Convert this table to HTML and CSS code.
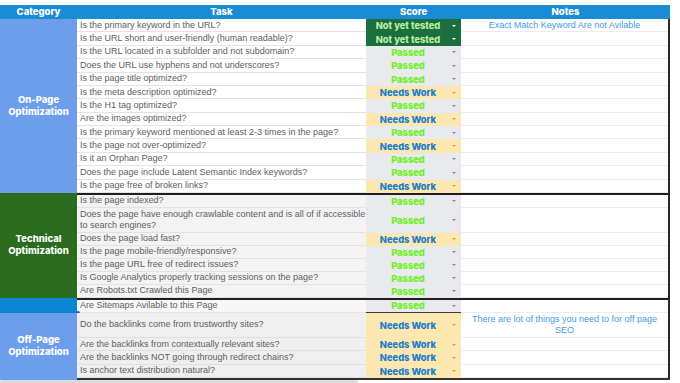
FILE: index.html
```html
<!DOCTYPE html>
<html lang="en">
<head>
<meta charset="utf-8">
<title>SEO Checklist</title>
<link rel="stylesheet" href="styles.css">
</head>
<body>
<div class="sheet">
  <div class="head">
    <div>Category</div>
    <div>Task</div>
    <div>Score</div>
    <div>Notes</div>
  </div>

  <section class="sec onpage">
    <div class="cat">On-Page<br>Optimization</div>
    <div class="rows">
      <div class="row"><div class="task">Is the primary keyword in the URL?</div><div class="score nyt">Not yet tested<i></i></div><div class="note">Exact Match Keyword Are not Avilable</div></div>
      <div class="row"><div class="task">Is the URL short and user-friendly (human readable)?</div><div class="score nyt">Not yet tested<i></i></div><div class="note"></div></div>
      <div class="row"><div class="task">Is the URL located in a subfolder and not subdomain?</div><div class="score ok">Passed<i></i></div><div class="note"></div></div>
      <div class="row"><div class="task">Does the URL use hyphens and not underscores?</div><div class="score ok">Passed<i></i></div><div class="note"></div></div>
      <div class="row"><div class="task">Is the page title optimized?</div><div class="score ok">Passed<i></i></div><div class="note"></div></div>
      <div class="row"><div class="task">Is the meta description optimized?</div><div class="score nw">Needs Work<i></i></div><div class="note"></div></div>
      <div class="row"><div class="task">Is the H1 tag optimized?</div><div class="score ok">Passed<i></i></div><div class="note"></div></div>
      <div class="row"><div class="task">Are the images optimized?</div><div class="score nw">Needs Work<i></i></div><div class="note"></div></div>
      <div class="row"><div class="task">Is the primary keyword mentioned at least 2-3 times in the page?</div><div class="score ok">Passed<i></i></div><div class="note"></div></div>
      <div class="row"><div class="task">Is the page not over-optimized?</div><div class="score nw">Needs Work<i></i></div><div class="note"></div></div>
      <div class="row"><div class="task">Is it an Orphan Page?</div><div class="score ok">Passed<i></i></div><div class="note"></div></div>
      <div class="row"><div class="task">Does the page include Latent Semantic Index keywords?</div><div class="score ok">Passed<i></i></div><div class="note"></div></div>
      <div class="row"><div class="task">Is the page free of broken links?</div><div class="score nw">Needs Work<i></i></div><div class="note"></div></div>
    </div>
  </section>

  <section class="sec tech">
    <div class="cat">Technical<br>Optimization</div>
    <div class="rows">
      <div class="row"><div class="task">Is the page indexed?</div><div class="score ok">Passed<i></i></div><div class="note"></div></div>
      <div class="row tall"><div class="task">Does the page have enough crawlable content and is all of if accessible<br>to search engines?</div><div class="score ok">Passed<i></i></div><div class="note"></div></div>
      <div class="row"><div class="task">Does the page load fast?</div><div class="score nw">Needs Work<i></i></div><div class="note"></div></div>
      <div class="row"><div class="task">Is the page mobile-friendly/responsive?</div><div class="score ok">Passed<i></i></div><div class="note"></div></div>
      <div class="row"><div class="task">Is the page URL free of redirect issues?</div><div class="score ok">Passed<i></i></div><div class="note"></div></div>
      <div class="row"><div class="task">Is Google Analytics properly tracking sessions on the page?</div><div class="score ok">Passed<i></i></div><div class="note"></div></div>
      <div class="row"><div class="task">Are Robots.txt Crawled this Page</div><div class="score ok">Passed<i></i></div><div class="note"></div></div>
    </div>
  </section>

  <section class="sec site">
    <div class="cat"></div>
    <div class="rows">
      <div class="row"><div class="task">Are Sitemaps Avilable to this Page</div><div class="score ok">Passed<i></i></div><div class="note"></div></div>
    </div>
    <span class="handle"></span>
  </section>

  <section class="sec off">
    <div class="cat">Off-Page<br>Optimization</div>
    <div class="rows">
      <div class="row tall"><div class="task">Do the backlinks come from trustworthy sites?</div><div class="score nw">Needs Work<i></i></div><div class="note">There are lot of things you need to for off page<br>SEO</div></div>
      <div class="row"><div class="task">Are the backlinks from contextually relevant sites?</div><div class="score nw">Needs Work<i></i></div><div class="note"></div></div>
      <div class="row"><div class="task">Are the backlinks NOT going through redirect chains?</div><div class="score nw">Needs Work<i></i></div><div class="note"></div></div>
      <div class="row"><div class="task">Is anchor text distribution natural?</div><div class="score nw">Needs Work<i></i></div><div class="note"></div></div>
    </div>
  </section>

  <div class="scrollbar"></div>
</div>
</body>
</html>
```

FILE: styles.css
```css
* { box-sizing: border-box; }

html, body {
  margin: 0;
  padding: 0;
  background: #ffffff;
}

body {
  font-family: "Liberation Sans", Arial, sans-serif;
}

.sheet {
  width: 670px;
  padding-top: 5px;
}

.head {
  display: grid;
  grid-template-columns: 77px 289px 95px 209px;
  height: 14px;
  background: #1a8bd5;
  color: #ffffff;
  font-family: Inter, "Open Sans", sans-serif;
  font-weight: 800;
  font-size: 9.5px;
  line-height: 14px;
  text-align: center;
}

.sec {
  position: relative;
  display: flex;
}

.cat {
  width: 77px;
  flex: none;
  display: flex;
  align-items: center;
  justify-content: center;
  text-align: center;
  color: #ffffff;
  font-family: Inter, "Open Sans", sans-serif;
  font-weight: 800;
  font-size: 9.5px;
  line-height: 12px;
}

.onpage .cat { background: #6d9eeb; }
.tech .cat { background: #2a6b1e; }
.site .cat { background: #0b86d4; }
.off .cat { background: #6d9eeb; }

.rows {
  width: 593px;
  border-right: 2px solid #2b2b2b;
}

.tech .rows,
.site .rows {
  border-top: 2px solid #1f1f1f;
}

.off .rows {
  border-bottom: 2px solid #333333;
}

.row {
  display: grid;
  grid-template-columns: 289px 95px 207px;
  height: 13.38px;
}

.tech .row { height: 13px; }
.site .row { height: 13px; }
.off .row { height: 13.34px; }
.row.tall { height: 25px; }

.task {
  display: flex;
  align-items: center;
  padding-left: 3px;
  font-size: 9px;
  line-height: 11px;
  color: #606060;
  border-bottom: 1px solid #e3e3e3;
  background: #ffffff;
  white-space: nowrap;
  overflow: hidden;
}

.tech .task { background: #f3f3f3; border-bottom-color: #e2e2e2; }
.site .task { background: #f7f7f7; }
.off .task { background: #efefef; border-bottom-color: #e0e0e0; }

.note {
  display: flex;
  align-items: center;
  justify-content: center;
  text-align: center;
  font-size: 9px;
  line-height: 11px;
  color: #449ddb;
  border-bottom: 1px solid #ececec;
  background: #ffffff;
}

.score {
  position: relative;
  display: flex;
  align-items: center;
  justify-content: center;
  padding-right: 11px;
  font-family: Inter, "Open Sans", sans-serif;
  font-weight: 800;
  font-size: 9.3px;
  white-space: nowrap;
}

.score i {
  position: absolute;
  right: 5px;
  top: 50%;
  margin-top: -1px;
  width: 0;
  height: 0;
  border-left: 2px solid transparent;
  border-right: 2px solid transparent;
  border-top: 2px solid #8a8a8a;
}

.score.ok { background: #e8eaed; color: #6ef01c; }
.score.nw { background: #fde7b0; color: #1a7dcc; }
.score.nw i { border-top-color: #c9a43a; }
.score.nyt { background: #1b6e3e; color: #b8f0a0; }
.score.nyt i { border-top-color: #ffffff; }

.site .score { border-bottom: 1px solid #3a3a3a; }

.handle {
  position: absolute;
  left: 76px;
  bottom: -2px;
  width: 4px;
  height: 4px;
  border-radius: 50%;
  background: #1a5fd6;
}

.scrollbar {
  width: 358px;
  height: 3px;
  background: #dadada;
  border-radius: 2px 2px 0 0;
}
```
